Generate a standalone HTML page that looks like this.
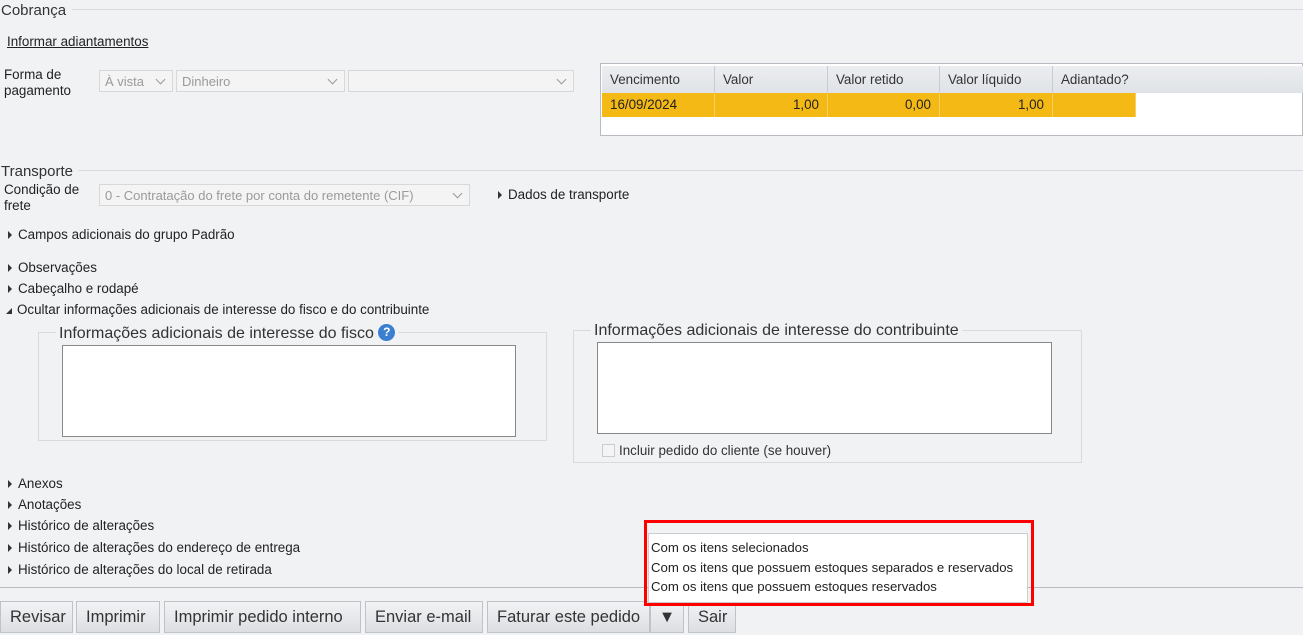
<!DOCTYPE html>
<html><head><meta charset="utf-8"><style>
*{box-sizing:border-box}
body{margin:0;width:1303px;height:635px;background:#f1f2f4;font-family:"Liberation Sans",sans-serif;font-size:13.4px;color:#222;position:relative;overflow:hidden}
.a{position:absolute;white-space:nowrap}
.hr{position:absolute;height:1px;background:#d6d8dc}
.sel{position:absolute;height:22px;border:1px solid #d8d8d8;background:#f4f4f4;color:#9a9a9a;padding:3px 5px;font-size:13px;white-space:nowrap;overflow:hidden}
.sel:after{content:"";position:absolute;right:8px;top:5px;width:6px;height:6px;border-right:1.5px solid #999;border-bottom:1.5px solid #999;transform:rotate(45deg)}
.tri{display:inline-block;width:0;height:0;border-left:4px solid #333;border-top:4px solid transparent;border-bottom:4px solid transparent;margin-right:6px;vertical-align:0}
.th{position:absolute;top:66px;height:27px;background:linear-gradient(#eceef1,#dfe2e6);border-right:1px solid #c8ccd2;padding:6px 8px;color:#333}
.td{position:absolute;top:93px;height:24px;background:#f5b916;border-right:1px solid #f8d060;padding:4px 8px;color:#222}
.btn{position:absolute;top:601px;height:32px;border:1px solid #bfc3c8;background:linear-gradient(#f2f3f5,#dcdee2);padding:6px 9px;font-size:16.5px;color:#333;white-space:nowrap}
.fs{position:absolute;border:1px solid #d8dadd}
.ta{position:absolute;background:#fff;border:1px solid #888}
</style></head><body>
<div class="a" style="left:1px;top:2px;font-size:15px;color:#333">Cobrança</div>
<div class="hr" style="left:72px;top:9px;width:1231px"></div>
<div class="a" style="left:7px;top:34px;text-decoration:underline;color:#222">Informar adiantamentos</div>
<div class="a" style="left:4px;top:67px;line-height:16px">Forma de<br>pagamento</div>
<div class="sel" style="left:99px;top:70px;width:74px">À vista</div>
<div class="sel" style="left:176px;top:70px;width:169px">Dinheiro</div>
<div class="sel" style="left:348px;top:70px;width:226px"></div>
<div style="position:absolute;left:600px;top:63px;width:703px;height:73px;background:#fff;border:1px solid #b8bcc2"></div>
<div class="th" style="left:602px;width:113px">Vencimento</div>
<div class="th" style="left:715px;width:113px">Valor</div>
<div class="th" style="left:828px;width:112px">Valor retido</div>
<div class="th" style="left:940px;width:113px">Valor líquido</div>
<div class="th" style="left:1053px;width:250px;border-right:0">Adiantado?</div>
<div class="td" style="left:602px;width:113px">16/09/2024</div>
<div class="td" style="left:715px;width:113px;text-align:right">1,00</div>
<div class="td" style="left:828px;width:112px;text-align:right">0,00</div>
<div class="td" style="left:940px;width:113px;text-align:right">1,00</div>
<div class="td" style="left:1053px;width:83px"></div>
<div class="a" style="left:1px;top:163px;font-size:15px;color:#333">Transporte</div>
<div class="hr" style="left:78px;top:170px;width:1225px"></div>
<div class="a" style="left:4px;top:182px;line-height:16px">Condição de<br>frete</div>
<div class="sel" style="left:99px;top:184px;width:371px">0 - Contratação do frete por conta do remetente (CIF)</div>
<div class="a" style="left:498px;top:187px"><span class="tri"></span>Dados de transporte</div>
<div class="a" style="left:8px;top:227px"><span class="tri"></span>Campos adicionais do grupo Padrão</div>
<div class="a" style="left:8px;top:260px"><span class="tri"></span>Observações</div>
<div class="a" style="left:8px;top:281px"><span class="tri"></span>Cabeçalho e rodapé</div>
<div class="a" style="left:6px;top:302px"><span style="display:inline-block;width:0;height:0;border-right:6px solid #333;border-top:6px solid transparent;margin-right:5px"></span>Ocultar informações adicionais de interesse do fisco e do contribuinte</div>
<div class="fs" style="left:38px;top:332px;width:509px;height:109px"></div>
<div class="a" style="left:56px;top:324px;font-size:16px;background:#f1f2f4;padding:0 3px;color:#333">Informações adicionais de interesse do fisco <span style="display:inline-block;width:17px;height:17px;border-radius:50%;background:#3a7fd0;color:#fff;font-size:12px;font-weight:bold;text-align:center;line-height:17px;vertical-align:2px">?</span></div>
<div class="ta" style="left:62px;top:345px;width:454px;height:92px"></div>
<div class="fs" style="left:573px;top:330px;width:509px;height:133px"></div>
<div class="a" style="left:591px;top:322px;font-size:16px;background:#f1f2f4;padding:0 3px;color:#333">Informações adicionais de interesse do contribuinte</div>
<div class="ta" style="left:597px;top:342px;width:455px;height:92px"></div>
<div class="a" style="left:602px;top:443px;color:#333"><span style="display:inline-block;width:13px;height:13px;border:1px solid #ccc;background:#f4f4f4;vertical-align:-2px;margin-right:4px"></span>Incluir pedido do cliente (se houver)</div>
<div class="a" style="left:8px;top:476px"><span class="tri"></span>Anexos</div>
<div class="a" style="left:8px;top:497px"><span class="tri"></span>Anotações</div>
<div class="a" style="left:8px;top:518px"><span class="tri"></span>Histórico de alterações</div>
<div class="a" style="left:8px;top:540px"><span class="tri"></span>Histórico de alterações do endereço de entrega</div>
<div class="a" style="left:8px;top:562px"><span class="tri"></span>Histórico de alterações do local de retirada</div>
<div class="hr" style="left:0;top:587px;width:1303px;background:#b8bbbf"></div>
<div class="btn" style="left:0;width:73px">Revisar</div>
<div class="btn" style="left:76px;width:84px">Imprimir</div>
<div class="btn" style="left:164px;width:197px">Imprimir pedido interno</div>
<div class="btn" style="left:365px;width:118px">Enviar e-mail</div>
<div class="btn" style="left:487px;width:163px">Faturar este pedido</div>
<div class="btn" style="left:650px;width:34px;text-align:center;padding:6px 0">▼</div>
<div class="btn" style="left:688px;width:48px">Sair</div>
<div style="position:absolute;left:648px;top:533px;width:380px;height:70px;background:#fff;border:1px solid #ccc"></div>
<div class="a" style="left:651px;top:540px;font-size:13.2px">Com os itens selecionados</div>
<div class="a" style="left:651px;top:560px;font-size:13.2px">Com os itens que possuem estoques separados e reservados</div>
<div class="a" style="left:651px;top:579px;font-size:13.2px">Com os itens que possuem estoques reservados</div>
<div style="position:absolute;left:644px;top:520px;width:390px;height:86px;border:3px solid #f00"></div>
</body></html>
